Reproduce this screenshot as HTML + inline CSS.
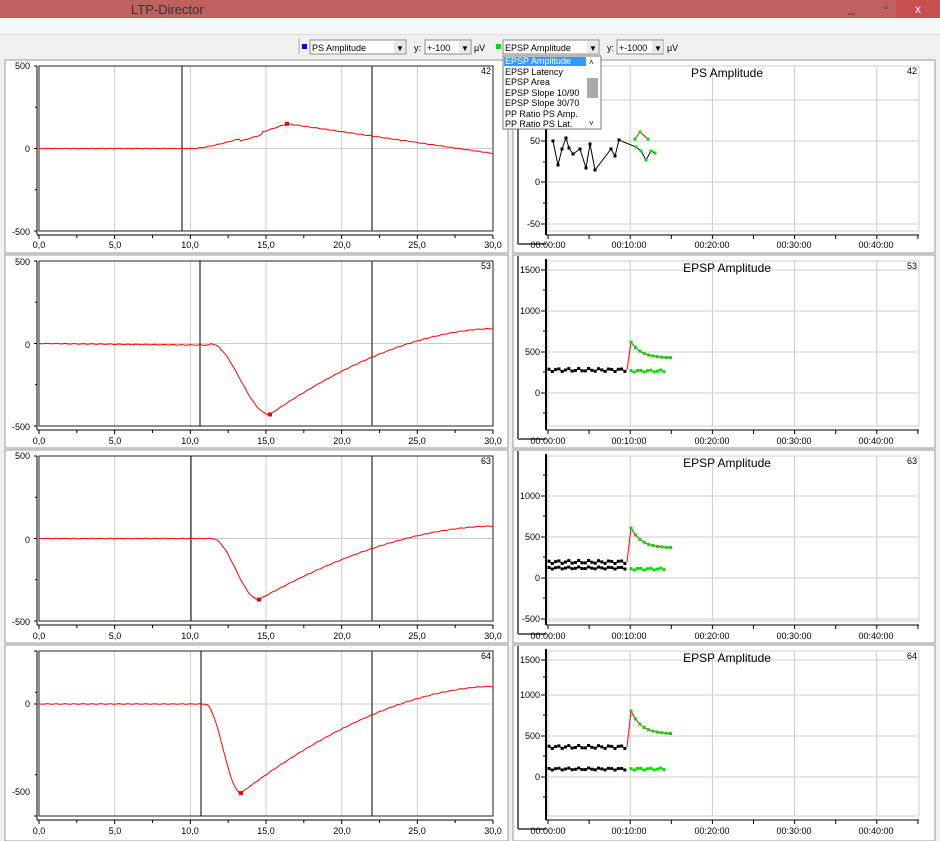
<!DOCTYPE html>
<html><head><meta charset="utf-8"><style>
body{margin:0;width:940px;height:841px;overflow:hidden;background:#f0f0f0;font-family:"Liberation Sans",sans-serif;position:relative}
.tb{position:absolute;left:0;top:0;width:940px;height:18px;background:#c0605f}
.ab{position:absolute;font-size:10px}
svg{position:absolute;left:0;top:0}
</style></head><body>
<div class="tb"></div>
<div class="ab" style="left:131px;top:2px;font-size:13px;color:#333">LTP-Director</div>
<div class="ab" style="left:848px;top:1px;font-size:12px;color:#333">_</div>
<div class="ab" style="left:884px;top:2px;font-size:11px;color:#333">▫</div>
<div style="position:absolute;left:896px;top:0;width:44px;height:18px;background:#c7504f;color:#fff;font-size:12px;text-align:center;line-height:18px">x</div>
<div style="position:absolute;left:0;top:18px;width:940px;height:16px;background:#f7f7f7;border-bottom:1px solid #ddd"></div>
<svg width="940" height="841" id="s" xmlns="http://www.w3.org/2000/svg" font-family="Liberation Sans, sans-serif">
<defs><g id="xl"><text x="39" y="0">0,0</text><text x="115" y="0">5,0</text><text x="190" y="0">10,0</text><text x="266" y="0">15,0</text><text x="342" y="0">20,0</text><text x="417" y="0">25,0</text><text x="493" y="0">30,0</text>
<text x="548" y="0">00:00:00</text><text x="629" y="0">00:10:00</text><text x="712" y="0">00:20:00</text><text x="794" y="0">00:30:00</text><text x="876" y="0">00:40:00</text></g></defs>
<g id="g"></g>
<line x1="299" y1="38" x2="299" y2="54" stroke="#aaa"/>
<rect x="302" y="44" width="5" height="5" fill="#00f"/>
<rect x="310" y="40" width="96" height="14" fill="#fff" stroke="#888"/><text x="312" y="51" font-size="9">PS Amplitude</text><rect x="394" y="41" width="11" height="12" fill="#e8e8e8"/><text x="396" y="51" font-size="8">▼</text>
<text x="414" y="51" font-size="9">y:</text>
<rect x="425" y="40" width="46" height="14" fill="#fff" stroke="#888"/><text x="427" y="51" font-size="9">+-100</text><rect x="459" y="41" width="11" height="12" fill="#e8e8e8"/><text x="461" y="51" font-size="8">▼</text>
<text x="474" y="51" font-size="9">µV</text>
<rect x="496" y="44" width="5" height="5" fill="#0d0"/>
<rect x="503" y="40" width="96" height="14" fill="#fff" stroke="#888"/><text x="505" y="51" font-size="9">EPSP Amplitude</text><rect x="587" y="41" width="11" height="12" fill="#e8e8e8"/><text x="589" y="51" font-size="8">▼</text>
<text x="607" y="51" font-size="9">y:</text>
<rect x="617" y="40" width="46" height="14" fill="#fff" stroke="#888"/><text x="619" y="51" font-size="9">+-1000</text><rect x="652" y="41" width="11" height="12" fill="#e8e8e8"/><text x="654" y="51" font-size="8">▼</text>
<text x="667" y="51" font-size="9">µV</text>
<g font-size="9" text-anchor="end" fill="#000">
<text x="30" y="69">500</text><text x="30" y="152">0</text><text x="30" y="235">-500</text>
<text x="30" y="265">500</text><text x="30" y="348">0</text><text x="30" y="430">-500</text>
<text x="30" y="459">500</text><text x="30" y="543">0</text><text x="30" y="625">-500</text>
<text x="30" y="707">0</text><text x="30" y="795">-500</text>
<text x="491" y="74">42</text><text x="491" y="269">53</text><text x="491" y="464">63</text><text x="491" y="659">64</text>
<text x="917" y="74">42</text><text x="917" y="269">53</text><text x="917" y="464">63</text><text x="917" y="659">64</text>
<text x="540" y="144">50</text><text x="540" y="185">0</text><text x="540" y="227">-50</text>
<text x="540" y="273">1500</text><text x="540" y="314">1000</text><text x="540" y="355">500</text><text x="540" y="396">0</text>
<text x="540" y="499">1000</text><text x="540" y="540">500</text><text x="540" y="581">0</text><text x="540" y="622">-500</text>
<text x="540" y="663">1500</text><text x="540" y="698">1000</text><text x="540" y="739">500</text><text x="540" y="780">0</text>
</g>
<g font-size="12" text-anchor="middle">
<text x="727" y="77">PS Amplitude</text><text x="727" y="272">EPSP Amplitude</text><text x="727" y="467">EPSP Amplitude</text><text x="727" y="662">EPSP Amplitude</text>
</g>
<g font-size="9" text-anchor="middle">
<use href="#xl" y="248"/><use href="#xl" y="444"/><use href="#xl" y="639"/><use href="#xl" y="834"/>
</g>
<rect x="503" y="56" width="98" height="73" fill="#fff" stroke="#777"/>
<rect x="504" y="57" width="82" height="9" fill="#3399ff"/>
<rect x="587" y="78" width="11" height="20" fill="#aaa"/>
<g font-size="9"><text x="505" y="64" fill="#fff">EPSP Amplitude</text><text x="505" y="75">EPSP Latency</text><text x="505" y="85">EPSP Area</text><text x="505" y="96">EPSP Slope 10/90</text><text x="505" y="106">EPSP Slope 30/70</text><text x="505" y="117">PP Ratio PS Amp.</text><text x="505" y="127">PP Ratio PS Lat.</text>
<text x="589" y="65" font-size="8">˄</text><text x="589" y="126" font-size="8">˅</text></g>
</svg>
<script>
var g=document.getElementById('g'),s='';
function L(x1,y1,x2,y2,c,w){s+='<line x1="'+x1+'" y1="'+y1+'" x2="'+x2+'" y2="'+y2+'" stroke="'+c+'" stroke-width="'+(w||1)+'"/>';}
function P(pts,c,w){s+='<polyline fill="none" stroke="'+c+'" stroke-width="'+(w||1)+'" points="'+pts.map(p=>p.join(',')).join(' ')+'"/>';}
function D(pts,c){pts.forEach(p=>{s+='<rect x="'+(p[0]-1.5)+'" y="'+(p[1]-1.5)+'" width="3" height="3" fill="'+c+'"/>';});}
var tops=[60,255,450,645];
var curs=[182,200,191,201];
var trace=[[0,0,195,0,287,-150],[0,0,210,-10,270,430],[0,0,212,0,259,370],[0,0,205,0,241,506]];
var ends=[-30,90,75,100];
for(var k=0;k<4;k++){
 var t=tops[k],py=t+6,ph=165,mid=py+ph/2,sc=ph/2/500;
 if(k==3){mid=704;sc=88/500;}
 s+='<rect x="5" y="'+t+'" width="503" height="'+(k==3?196:193)+'" fill="#fff" stroke="#999"/>';
 s+='<rect x="513" y="'+t+'" width="422" height="'+(k==3?196:193)+'" fill="#fff" stroke="#999"/>';
 for(var i=1;i<6;i++)L(39+i*75.67,py,39+i*75.67,py+ph,'#ccc');
 L(39,mid,493,mid,'#ccc');
 s+='<rect x="39" y="'+py+'" width="454" height="'+ph+'" fill="none" stroke="#222"/>';
 L(37,py,37,py+ph+4,'#000');L(37,py+ph+4,493,py+ph+4,'#000');
 for(i=0;i<=12;i++)L(39+i*37.83,py+ph+4,39+i*37.83,py+ph+(i%2?7:8),'#000');
 L(34,py,37,py,'#000');L(34,mid,37,mid,'#000');L(34,py+ph,37,py+ph,'#000');L(35,py+ph/4,37,py+ph/4,'#000');L(35,py+ph*3/4,37,py+ph*3/4,'#000');
 L(curs[k],py,curs[k],py+ph,'#000');L(372,py,372,py+ph,'#555',1.5);
 var pts=[],tr=trace[k],mx=tr[4],mv=tr[5],st=tr[2],e=ends[k];
 for(var x=39;x<=493;x+=2){var v;
  if(k==0){v= x<195?0: x<287? 150*Math.pow((x-195)/92,1.3): 150-(x-287)/(493-287)*180; v+= (x>240&&x<262?-15:0);}
  else{ if(x<st)v=-(x-39)/(st-39)*10*(k==1?1:0);
   else if(x<mx){var u=(x-st)/(mx-st);v=-mv*(0.5-0.5*Math.cos(Math.PI*u));}
   else{var u=(x-mx)/(493-mx);v=-mv+(mv+e)*(1-Math.pow(1-u,1.8));}}
  v+=Math.sin(x*0.7)*2;
  pts.push([x,(mid-v*sc).toFixed(1)]);}
 P(pts,'#f00');
 var my=k==0?mid-150*sc:mid+mv*sc;s+='<rect x="'+((k==0?287:mx)-2)+'" y="'+(my-2)+'" width="4" height="4" fill="#e00"/>';
 for(i=1;i<5;i++)L(548+i*82.2,py,548+i*82.2,py+ph,'#ccc');
 s+='<rect x="548" y="'+py+'" width="371" height="'+ph+'" fill="none" stroke="#ccc"/>';
 L(518,t+1,518,t+184,'#666',2);L(518,t+184,546,t+184,'#666',2);
 L(546,py-2,546,py+ph+4,'#000',2);L(546,py+ph+4,919,py+ph+4,'#000');
 for(i=0;i<=9;i++)L(548+i*41.1,py+ph+4,548+i*41.1,py+ph+8,'#000');
}
function hg(ys){ys.forEach(y=>{L(548,y,919,y,'#ccc');L(541,y,546,y,'#000');});}
hg([100,141,182,224]);hg([270,311,352,393]);hg([496,537,578,619]);hg([660,695,736,777]);
[[121,162,203],[290,331,372,413],[475,516,557,598],[677,715,756,797]].forEach(a=>a.forEach(y=>L(543,y,546,y,'#000')));
var ps=[[553,141],[558,165],[562,149],[566,138],[569,148],[573,154],[580,149],[586,168],[590,144],[595,170],[611,149],[615,156],[619,140]];
P(ps.concat([[636,147]]),'#000');D(ps,'#000');
var gp=[[636,147],[641,151],[646,160],[651,151],[655,153]];P(gp,'#000');D(gp,'#0d0');
var gr=[[635,139],[640,132],[648,139]];P(gr,'#f00');D(gr,'#0d0');
function series(y0,x0,x1,jit){var a=[];for(var x=x0;x<=x1;x+=3.3)a.push([x,(y0+Math.sin(x*1.3)*jit).toFixed(1)]);return a;}
function decay(yA,yB,x0,x1){var a=[];for(var x=x0;x<=x1;x+=4.4){var u=(x-x0)/(x1-x0);a.push([x,(yB+(yA-yB)*Math.exp(-u*4)).toFixed(1)]);}return a;}
[[370,null,342,358,371],[562,568,528,548,569],[747,769,711,734,769]].forEach(r=>{
 var b=series(r[0],549,627,1.5);P(b,'#000');D(b,'#000');
 L(627,r[0],631,r[2],'#f00');
 var d=decay(r[2],r[3],631,673);P(d,'#f00');D(d,'#0d0');
 if(r[1]){var b2=series(r[1],549,627,1);P(b2,'#000');D(b2,'#000');}
 var g2=series(r[4],631,667,1);P(g2,'#0d0');D(g2,'#0d0');
});
g.innerHTML=s;
</script>
</body></html>
